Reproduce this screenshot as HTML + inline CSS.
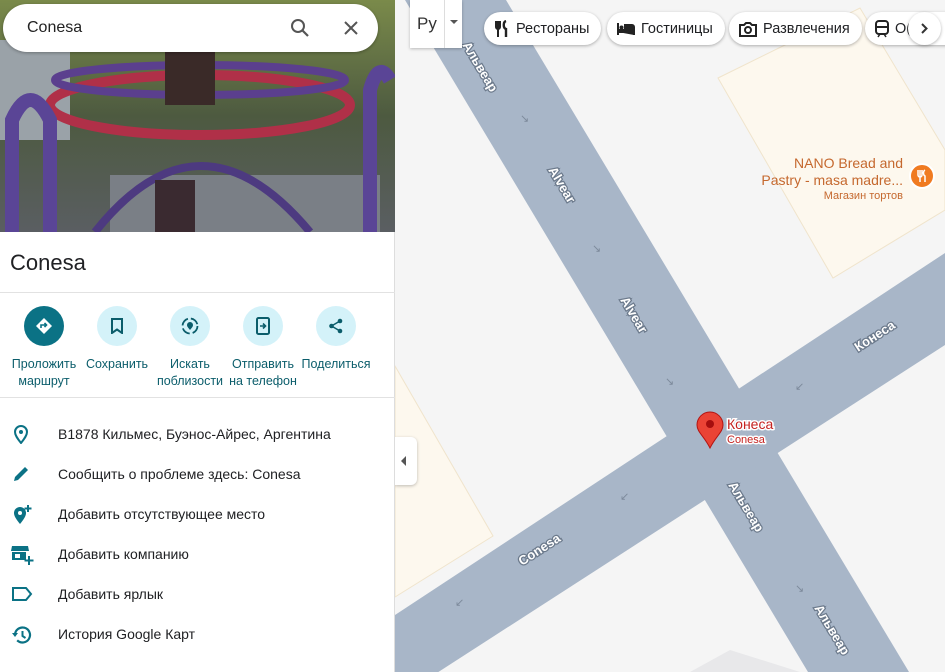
<!DOCTYPE html>
<html><head><meta charset="utf-8"><style>
*{margin:0;padding:0;box-sizing:border-box}
body{width:945px;height:672px;overflow:hidden;font-family:"Liberation Sans",Arial,sans-serif;background:#f5f5f5;position:relative}
#map{position:absolute;left:0;top:0}
#panel{position:absolute;left:0;top:0;width:395px;height:672px;background:#fff;border-right:1px solid #ddd}
.search{position:absolute;left:3px;top:4px;width:375px;height:48px;background:#fff;border-radius:24px;box-shadow:0 1px 3px rgba(0,0,0,.3)}
.search span{position:absolute;left:24px;top:15px;font-size:16px;color:#222}
.title{position:absolute;left:10px;top:250px;font-size:22px;color:#202124}
.hr{position:absolute;left:0;width:395px;height:1px;background:#e2e2e2}
.act{position:absolute;top:306px;width:76px;text-align:center;font-size:12.5px;color:#0b5d6b;line-height:17px}
.act .c{width:40px;height:40px;border-radius:50%;background:#d4f2f9;margin:0 auto 10px;display:flex;align-items:center;justify-content:center}
.row{position:absolute;left:0;height:40px;width:395px}
.row svg{position:absolute;left:11px;top:10px}
.row span{position:absolute;left:58px;top:12px;font-size:14px;color:#202124}
.chip{position:absolute;top:12px;height:33px;background:#fff;border-radius:17px;box-shadow:0 1px 3px rgba(0,0,0,.3);font-size:14.5px;color:#202124;display:flex;align-items:center;padding:0 12px 0 10px;gap:6px}
</style></head><body>
<svg id="map" width="945" height="672">
<rect width="945" height="672" fill="#f5f5f5"/>
<polygon points="718,78,860,8,945,150,945,210,833,278" fill="#fdf8ee" stroke="#f0e4cc"/>
<polygon points="395,366,493,536,395,597" fill="#fdf8ee" stroke="#f0e4cc"/>
<polygon points="690,672,730,650,800,672" fill="#e8e8ea"/>
<polygon points="405,0,506,0,909,672,808,672" fill="#a8b6c8"/>
<polygon points="395,615,945,253,945,345,395,700" fill="#a8b6c8"/>
<g font-family="Liberation Sans" font-weight="bold" font-size="13" fill="#fff" stroke="#6c7a8c" stroke-width="2.5" paint-order="stroke">
<text transform="translate(548,170) rotate(59)">Alvear</text>
<text transform="translate(620,300) rotate(59)">Alvear</text>
<text transform="translate(462,45) rotate(59)">Альвеар</text>
<text transform="translate(728,485) rotate(59)">Альвеар</text>
<text transform="translate(814,608) rotate(59)">Альвеар</text>
<text transform="translate(858,352) rotate(-33)">Конеса</text>
<text transform="translate(522,566) rotate(-33)">Conesa</text>
</g>
<g fill="#7d8a9b" font-size="11">
<text x="665" y="385">↘</text><text x="795" y="390">↙</text><text x="620" y="500">↙</text><text x="455" y="606">↙</text><text x="795" y="592">↘</text><text x="592" y="252">↘</text><text x="520" y="122">↘</text>
</g>
<path d="M710 448 C704 436 697 432 697 425 A13 13 0 0 1 723 425 C723 432 716 436 710 448Z" fill="#ea4335" stroke="#b31412"/>
<circle cx="710" cy="424" r="4" fill="#a50e0e"/>
<text x="727" y="429" font-size="14" fill="#c5221f" stroke="#fff" stroke-width="3" paint-order="stroke">Конеса</text>
<text x="727" y="443" font-size="11" fill="#c5221f" stroke="#fff" stroke-width="3" paint-order="stroke">Conesa</text>
<text x="903" y="168" font-size="14" fill="#c5682e" text-anchor="end">NANO Bread and</text>
<text x="903" y="185" font-size="14" fill="#c5682e" text-anchor="end">Pastry - masa madre...</text>
<text x="903" y="199" font-size="11" fill="#c5682e" text-anchor="end">Магазин тортов</text>
<circle cx="922" cy="176" r="12" fill="#f07b21" stroke="#fff" stroke-width="2"/>
<path d="M918 170v5a2 2 0 0 0 4 0v-5M920 170v12M925 170c-2 1-2 5 0 6v6" stroke="#fff" stroke-width="1.5" fill="none"/>
</svg>
<div style="position:absolute;left:410px;top:0;width:52px;height:48px;background:#fff;box-shadow:0 1px 3px rgba(0,0,0,.25)"><span style="position:absolute;left:7px;top:14px;font-size:17px;color:#333">Pу</span><div style="position:absolute;left:34px;top:0;width:1px;height:48px;background:#ddd"></div><div style="position:absolute;left:40px;top:20px;border:4px solid transparent;border-top-color:#555"></div></div>
<div class="chip" style="left:484px"><svg width="16" height="18" viewBox="0 0 16 18"><path d="M2 1v6a2 2 0 0 0 4 0V1M4 1v16" stroke="#222" stroke-width="2" fill="none"/><path d="M12 1c-3 1-3 7 0 8v8" stroke="#222" stroke-width="2.4" fill="none"/></svg>Рестораны</div>
<div class="chip" style="left:607px"><svg width="18" height="14" viewBox="0 0 18 14"><path d="M1 1v12M1 10h16v3M1 8h16V5a2 2 0 0 0-2-2H8v5" stroke="#222" stroke-width="2" fill="#222"/><circle cx="4.5" cy="5.5" r="2" fill="#222"/></svg>Гостиницы</div>
<div class="chip" style="left:729px"><svg width="18" height="16" viewBox="0 0 18 16"><path d="M1 4h4l2-2h4l2 2h4v11H1Z" fill="none" stroke="#222" stroke-width="2"/><circle cx="9" cy="9" r="3" fill="none" stroke="#222" stroke-width="2"/></svg>Развлечения</div>
<div class="chip" style="left:865px;width:100px"><svg width="14" height="18" viewBox="0 0 14 18"><rect x="1" y="1" width="12" height="13" rx="3" fill="none" stroke="#222" stroke-width="2"/><path d="M1 7h12" stroke="#222" stroke-width="2"/><path d="M3 17l2-3M11 17l-2-3" stroke="#222" stroke-width="1.5"/></svg>О(</div>
<div style="position:absolute;left:908px;top:12px;width:33px;height:33px;border-radius:50%;background:#fff;box-shadow:0 1px 3px rgba(0,0,0,.3)"><svg style="position:absolute;left:11px;top:11px" width="11" height="11"><path d="M3 1l4.5 4.5L3 10" stroke="#333" stroke-width="2" fill="none"/></svg></div>
<div style="position:absolute;left:395px;top:437px;width:22px;height:48px;background:#fff;border-radius:0 6px 6px 0;box-shadow:0 1px 3px rgba(0,0,0,.25)"><div style="position:absolute;left:6px;top:19px;border:5px solid transparent;border-right-color:#555;border-left:0"></div></div>
<div id="panel">
<svg width="395" height="232" style="position:absolute;left:0;top:0">
<defs><linearGradient id="g" x1="0" y1="0" x2="0" y2="1"><stop offset="0" stop-color="#7a8a4a"/><stop offset=".5" stop-color="#4d5a40"/><stop offset="1" stop-color="#5a5e62"/></linearGradient></defs>
<rect width="395" height="232" fill="url(#g)"/>
<rect x="0" y="40" width="70" height="100" fill="#9aa2a8"/>
<rect x="110" y="175" width="270" height="57" fill="#7a7f86"/>
<ellipse cx="200" cy="105" rx="150" ry="30" fill="none" stroke="#b03048" stroke-width="10"/>
<ellipse cx="200" cy="80" rx="145" ry="15" fill="none" stroke="#5b3f8e" stroke-width="8"/>
<path d="M12 232 L12 120 Q30 80 50 120 L50 232" fill="none" stroke="#5a4596" stroke-width="14"/>
<path d="M370 232 L370 90 Q378 60 390 80" fill="none" stroke="#5a4596" stroke-width="14"/>
<path d="M95 232 Q200 100 310 232" fill="none" stroke="#4d3a80" stroke-width="8"/>
<rect x="165" y="50" width="50" height="55" fill="#3a2a28"/>
<rect x="155" y="180" width="40" height="52" fill="#3a2a30"/>
</svg>
<div class="search"><span>Conesa</span>
<svg style="position:absolute;left:287px;top:14px" width="20" height="20" viewBox="0 0 20 20"><circle cx="8" cy="8" r="6" fill="none" stroke="#555" stroke-width="2"/><path d="M12.5 12.5L18 18" stroke="#555" stroke-width="2.2"/></svg>
<svg style="position:absolute;left:340px;top:16px" width="16" height="16"><path d="M2 2L14 14M14 2L2 14" stroke="#555" stroke-width="2"/></svg></div>
<div class="title">Conesa</div>
<div class="hr" style="top:292px"></div>
<div class="act" style="left:6px"><div class="c" style="background:#0b7285"><svg width="20" height="20" viewBox="0 0 20 20"><path d="M10 2L18 10L10 18L2 10Z" fill="#fff"/><path d="M7 12V9h5M10.5 7l2 2-2 2" stroke="#0b7285" stroke-width="1.6" fill="none"/></svg></div>Проложить<br>маршрут</div>
<div class="act" style="left:79px"><div class="c"><svg width="14" height="16"><path d="M2 1h10v14l-5-3.5L2 15Z" fill="none" stroke="#0b5d6b" stroke-width="2"/></svg></div>Сохранить</div>
<div class="act" style="left:152px"><div class="c"><svg width="18" height="18"><circle cx="9" cy="9" r="7.5" fill="none" stroke="#0b5d6b" stroke-width="1.8" stroke-dasharray="9 3"/><path d="M9 13c-2-2.5-3-3.5-3-5a3 3 0 0 1 6 0c0 1.5-1 2.5-3 5Z" fill="#0b5d6b"/></svg></div>Искать<br>поблизости</div>
<div class="act" style="left:225px"><div class="c"><svg width="14" height="18"><rect x="1" y="1" width="12" height="16" rx="1.5" fill="none" stroke="#0b5d6b" stroke-width="2"/><path d="M4 9h5M7 6.5L9.5 9 7 11.5" stroke="#0b5d6b" stroke-width="1.6" fill="none"/></svg></div>Отправить<br>на телефон</div>
<div class="act" style="left:298px"><div class="c"><svg width="16" height="16"><circle cx="12" cy="3" r="2.3" fill="#0b5d6b"/><circle cx="3.5" cy="8" r="2.3" fill="#0b5d6b"/><circle cx="12" cy="13" r="2.3" fill="#0b5d6b"/><path d="M12 3L3.5 8 12 13" stroke="#0b5d6b" stroke-width="1.5" fill="none"/></svg></div>Поделиться</div>
<div class="hr" style="top:397px"></div>
<div class="row" style="top:414px"><svg width="20" height="20" viewBox="0 0 20 20"><path d="M10 19C6 14 4 11 4 8a6 6 0 0 1 12 0c0 3-2 6-6 11Z" fill="none" stroke="#0b7285" stroke-width="2"/><circle cx="10" cy="8" r="2" fill="#0b7285"/></svg><span>B1878 Кильмес, Буэнос-Айрес, Аргентина</span></div>
<div class="row" style="top:454px"><svg width="20" height="20" viewBox="0 0 20 20"><path d="M3 17l1-4L14 3l3 3L7 16Z" fill="#0b7285"/></svg><span>Сообщить о проблеме здесь: Conesa</span></div>
<div class="row" style="top:494px"><svg width="22" height="22" viewBox="0 0 22 22"><path d="M9 20C5 15 3 12 3 9a6 6 0 0 1 12 0c0 3-2 6-6 11Z" fill="#0b7285"/><circle cx="9" cy="9" r="2" fill="#fff"/><path d="M17 1v7M13.5 4.5h7" stroke="#0b7285" stroke-width="2"/></svg><span>Добавить отсутствующее место</span></div>
<div class="row" style="top:534px"><svg width="24" height="22" viewBox="0 0 24 22"><path d="M1 2h16l1 5H0Z" fill="#0b7285"/><rect x="1" y="8" width="14" height="8" fill="#0b7285"/><rect x="4" y="10" width="5" height="4" fill="#fff"/><path d="M18 12v9M13.5 16.5h9" stroke="#0b7285" stroke-width="2"/></svg><span>Добавить компанию</span></div>
<div class="row" style="top:574px"><svg width="22" height="20" viewBox="0 0 22 20"><path d="M2 4h13l5 6-5 6H2Z" fill="none" stroke="#0b7285" stroke-width="2"/></svg><span>Добавить ярлык</span></div>
<div class="row" style="top:614px"><svg width="22" height="22" viewBox="0 0 22 22"><path d="M4 11a7.5 7.5 0 1 1 2.2 5.3" fill="none" stroke="#0b7285" stroke-width="2.2"/><path d="M1 9l3 4 3-4Z" fill="#0b7285"/><path d="M11.5 7v5l3 2" stroke="#0b7285" stroke-width="2" fill="none"/></svg><span>История Google Карт</span></div>
</div>
</body></html>
